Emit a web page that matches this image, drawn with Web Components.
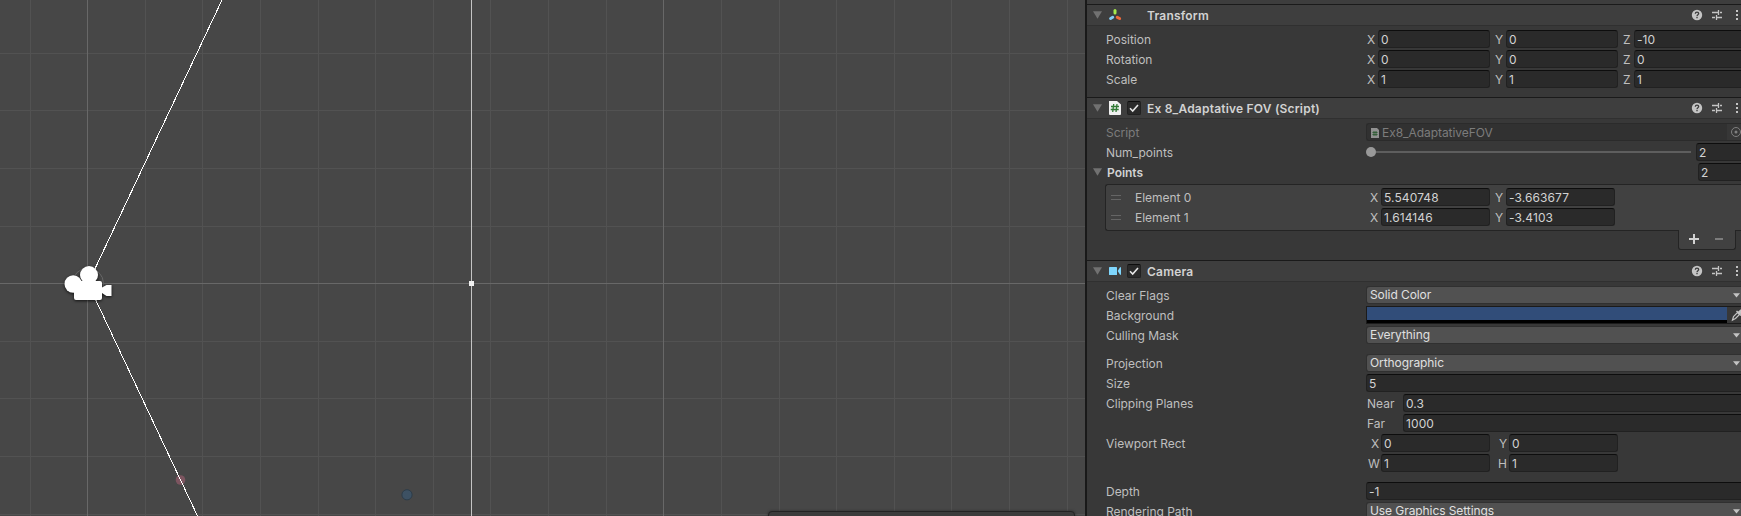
<!DOCTYPE html>
<html lang="en">
<head>
<meta charset="utf-8">
<title>Editor</title>
<style>
html,body{margin:0;height:100%;overflow:hidden;background:#383838}
body{font:12px/18px Inter,"Liberation Sans",sans-serif;color:#bfbfbf}
</style>
</head>
<body>
<editor-window></editor-window>
<script>
const make = (name, html, setup) => customElements.define(name, class extends HTMLElement {
  constructor() {
    super();
    this.attachShadow({ mode: 'open' });
  }
  connectedCallback() {
    this.shadowRoot.innerHTML = typeof html === 'function' ? html(this) : html;
    if (setup) setup(this);
  }
});

const columns = [30,87,145,202,260,318,375,433,490,548,606,663,721,779,836,894,951,1009,1067];
const rows = [53,110,168,226,283,341,398,456,514];
const major = n => n === 87 || n === 663 || n === 283;

make('scene-view', () => `
<style>
:host{display:block;position:relative;background:#474747;overflow:hidden}
svg{display:block}
.overlay{position:absolute;left:768px;top:511px;width:305px;height:20px;border:1px solid #232323;border-radius:4px;background:#3c3c3c;box-shadow:0 0 3px #0006}
</style>
<svg width="1085" height="516" viewBox="0 0 1085 516">
  <g shape-rendering="crispEdges">
  ${columns.filter(x => !major(x)).map(x => `<rect x="${x}" width="1" height="516" fill="#525252"/>`).join('')}
  ${rows.filter(y => !major(y)).map(y => `<rect y="${y}" width="1085" height="1" fill="#525252"/>`).join('')}
  <rect x="87" width="1" height="516" fill="#686868"/><rect x="663" width="1" height="516" fill="#686868"/>
  <rect y="283" width="1085" height="1" fill="#686868"/>
  <rect x="471" width="1" height="516" fill="#c4c4c4"/><rect x="469" y="281" width="5" height="5" fill="#f0f0f0"/>
  </g>
  <circle cx="180.5" cy="480" r="4.8" fill="#7d5560"/>
  <circle cx="407" cy="494.8" r="5.1" fill="#3d5163" stroke="#2c3c49"/>
  <path d="M222 0 88 283.5 197.500 516" fill="none" stroke="#fff" stroke-width="1" shape-rendering="crispEdges"/>
  <circle cx="88" cy="283.500" r="16" fill="#474747"/>
  <path d="M71 283.500H104M87.500 268V300" stroke="#686868"/>
  <circle cx="88" cy="283.500" r="15.500" fill="none" stroke="#686868"/>
  <g fill="#fff" style="filter:drop-shadow(0 1px 1.5px #000b)">
    <circle cx="73.200" cy="284" r="8.700"/><circle cx="89" cy="275" r="9"/>
    <path d="M76 281H100Q102 281 102 283V287.500L106.500 285H111.500V296H106.500L102 293V298Q102 300 100 300H76Q74 300 74 298V283Q74 281 76 281Z"/>
  </g>
</svg>
<div class="overlay"></div>`);

make('fold-arrow', `<style>:host{display:block;width:9px;height:8px}svg{display:block}</style>
<svg width="9" height="8"><path d="M0 .3H9L4.500 7.700Z" fill="#717171"/></svg>`);

const icons = {
  transform: `<svg width="14" height="14" viewBox="0 0 14 14" fill="none" stroke-width="3" stroke-linecap="round"><path d="M7 2.500V5" stroke="#a6ea4c"/><path d="M4.700 9.300 2.600 10.500" stroke="#86cdf5"/><path d="M9.300 9.300 11.600 10.500" stroke="#ef6a3c"/></svg>`,
  script: `<svg width="14" height="14" viewBox="0 0 14 14"><path d="M1 0H9L13 3.500V13Q13 14 12 14H2Q1 14 1 13Z" fill="#f1f1f1"/><path d="M5.700 3 4.700 11M9 3 8 11M3 5.500H11M2.700 8.500H10.700" stroke="#317a35" stroke-width="1.300"/></svg>`,
  camera: `<svg width="14" height="14" viewBox="0 0 14 14" fill="#7fd6fd"><rect x="1" y="3" width="8" height="8" rx=".6"/><path d="M9.700 7 12 3.300H13V10.700H12Z"/></svg>`
};

make('component-header', el => `
<style>
:host{display:flex;align-items:center;box-sizing:border-box;height:22px;border-top:1px solid #1a1a1a;border-bottom:1px solid #303030;background:#3e3e3e;font-weight:600;color:#d2d2d2}
fold-arrow{margin-left:6px}
.icon{width:14px;height:14px;margin-left:6px}
.icon svg,.box svg{display:block}
.box{box-sizing:border-box;width:14px;height:14px;margin:0 6px 0 5px;border-radius:2px}
.on{background:#2a2a2a;border:1px solid #212121;border-top-color:#0d0d0d}
.title{flex:1;padding-top:2px;letter-spacing:.2px}
.tools{width:51px;height:14px}
</style>
<fold-arrow></fold-arrow>
<div class="icon">${icons[el.getAttribute('icon')]}</div>
<div class="box ${el.hasAttribute('toggle') ? 'on' : ''}">${el.hasAttribute('toggle') ? '<svg width="12" height="12"><path d="M2 6.300 4.700 9 10 3" fill="none" stroke="#e6e6e6" stroke-width="1.600"/></svg>' : ''}</div>
<div class="title"><slot></slot></div>
<svg class="tools" viewBox="0 0 51 14">
  <circle cx="7" cy="7" r="5.200" fill="#c4c4c4"/>
  <path d="M5.300 5.800Q5.400 4.200 7 4.200T8.700 5.600C8.700 6.800 7 6.700 7 8.200M7 9.100V10.300" fill="none" stroke="#3a3a3a" stroke-width="1.300"/>
  <path d="M22 4.500H28M30 4.500H32M22 9.500H25M27 9.500H32M28.500 2V7M26.500 7V12" fill="none" stroke="#c4c4c4" stroke-width="1.300"/>
  <path d="M46 2H48V4H46ZM46 6H48V8H46ZM46 10H48V12H46Z" fill="#c4c4c4"/>
</svg>`);

make('prop-row', el => `
<style>
:host{display:flex;height:18px;margin-bottom:2px;padding-left:var(--indent,19px);white-space:nowrap}
.label{flex:none;width:var(--label,260px);box-sizing:border-box;line-height:20px;letter-spacing:-.02px}
:host([off]) .label{color:#7c7c7c}
:host([strong]) .label{font-weight:600;color:#d2d2d2}
</style><div class="label">${el.getAttribute('label') || ''}</div><slot></slot>`);

make('num-field', el => `
<style>
:host{display:flex;flex:none}
:host([grow]){flex:1}
.axis{box-sizing:border-box;line-height:20px;width:${el.getAttribute('lw') || 0}px;padding-left:${el.getAttribute('pad') || 0}px}
.value{box-sizing:border-box;height:18px;padding-left:2px;line-height:18px;border:1px solid #212121;border-top-color:#0d0d0d;border-radius:3px;background:#2a2a2a;color:#d2d2d2;letter-spacing:.1px;${el.hasAttribute('grow') ? 'flex:1;border-right:0;border-radius:3px 0 0 3px' : `width:${el.getAttribute('w')}px`}}
</style>
${el.hasAttribute('axis') ? `<div class="axis">${el.getAttribute('axis')}</div>` : ''}<div class="value"><slot></slot></div>`);

make('drop-field', `
<style>
:host{display:flex;flex:1;box-sizing:border-box;height:18px;margin-left:1px;padding:0 1px 0 3px;justify-content:space-between;align-items:center;border:0 solid #303030;border-width:1px 0 1px 0;border-radius:3px 0 0 3px;background:#515151;color:#e0e0e0;box-shadow:-1px 0 #303030}
span{line-height:16px;margin-top:-1px;letter-spacing:-.08px}
</style><span><slot></slot></span><svg width="7" height="5"><path d="M0 .3H7L3.500 4.500Z" fill="#c4c4c4"/></svg>`);

make('object-field', `
<style>
:host{display:flex;flex:1;box-sizing:border-box;height:18px;align-items:center;border:1px solid #2b2b2b;border-right:0;border-radius:3px 0 0 3px;background:#313131;color:#7c7c7c}
.doc{margin:2px 3px 0 4px}
.txt{flex:1;padding-top:2px;letter-spacing:-.05px}
.pick{width:14px;height:16px;background:#373737}
</style>
<svg class="doc" width="8" height="10"><path d="M0 0H6L8 2V10H0Z" fill="#919191"/><path d="M3 3V8M5 3V8M1.500 4.500H6.500M1.500 6.500H6.500" stroke="#355f3a"/></svg>
<span class="txt"><slot></slot></span>
<svg class="pick" viewBox="0 0 14 16"><circle cx="9" cy="8" r="4.500" fill="none" stroke="#7f7f7f"/><circle cx="9" cy="8" r="1.500" fill="#7f7f7f"/></svg>`);

make('slider-track', `
<style>
:host{display:flex;align-items:center;width:325px;margin-right:5px}
i{width:10px;height:10px;border-radius:50%;background:#999}
b{flex:1;height:2px;background:#5e5e5e}
</style><i></i><b></b>`);

make('color-field', `
<style>
:host{display:flex;flex:1;box-sizing:border-box;height:18px;border:1px solid #1b1b1b;border-right:0;background:#383838}
.swatch{width:360px;box-sizing:border-box;background:#314d79;border-bottom:3px solid #000}
svg{margin-left:4px}
</style><div class="swatch"></div>
<svg width="11" height="16" viewBox="0 0 11 16"><path d="M1.500 13 2.500 9.500 6.500 5.500 8.500 7.500 4.500 11.500Z" fill="none" stroke="#c4c4c4" stroke-width="1.200"/><path d="M5 4.500 6 3.500 7.200 4.600 9.500 2.500 11 2.500V6L9.600 7 10.500 8 9.500 9Z" fill="#c4c4c4"/></svg>`);

make('point-list', `
<style>
:host{display:block;margin:1px 0 0 18px}
.box{box-sizing:border-box;height:47px;padding-top:3px;border:1px solid #242424;border-right:0;border-radius:3px 0 0 3px;background:#414141}
.item{display:flex}
.grip{width:10px;height:3px;margin:7px 0 0 5px;border:solid #656565;border-width:1px 0}
prop-row{--indent:14px;--label:232px}
.foot{display:flex;box-sizing:border-box;gap:16px;align-items:center;width:58px;height:20px;margin:-1px 0 0 573px;padding:0 0 2px 10px;border:1px solid #242424;border-top:0;border-radius:0 0 3px 3px;background:#414141}
</style>
<div class="box">
<div class="item"><div class="grip"></div><prop-row label="Element 0"><num-field axis="X" pad="3" lw="14" w="109">5.540748</num-field><num-field axis="Y" pad="5" lw="16" w="109">-3.663677</num-field></prop-row></div>
<div class="item"><div class="grip"></div><prop-row label="Element 1"><num-field axis="X" pad="3" lw="14" w="109">1.614146</num-field><num-field axis="Y" pad="5" lw="16" w="109">-3.4103</num-field></prop-row></div>
</div>
<div class="foot"><svg width="10" height="10"><path d="M0 5H10M5 0V10" stroke="#d2d2d2" stroke-width="2"/></svg><svg width="8" height="10"><path d="M0 5H8" stroke="#7c7c7c" stroke-width="2"/></svg></div>`);

make('inspector-panel', `
<style>
:host{display:block;box-sizing:border-box;border-left:2px solid #191919;background:#383838;overflow:hidden}
.strip{height:4px;background:#3d3d3d}
section{padding-top:4px;box-sizing:border-box}
.fold{display:flex}
.fold fold-arrow{margin:5px 0 0 6px}
.fold prop-row{flex:1;--indent:5px;--label:591px}
.gap{height:8px}
</style>
<div class="strip"></div>
<component-header icon="transform">Transform</component-header>
<section style="height:71px">
${[['Position','0','0','-10'],['Rotation','0','0','0'],['Scale','1','1','1']].map(r => `<prop-row label="${r[0]}"><num-field axis="X" pad="1" lw="12" w="112">${r[1]}</num-field><num-field axis="Y" pad="5" lw="16" w="112">${r[2]}</num-field><num-field axis="Z" pad="5" lw="16" grow>${r[3]}</num-field></prop-row>`).join('')}
</section>
<component-header icon="script" toggle>Ex 8_Adaptative FOV (Script)</component-header>
<section style="height:141px">
<prop-row label="Script" off><object-field>Ex8_AdaptativeFOV</object-field></prop-row>
<prop-row label="Num_points"><slider-track></slider-track><num-field grow>2</num-field></prop-row>
<div class="fold"><fold-arrow></fold-arrow><prop-row label="Points" strong><num-field grow>2</num-field></prop-row></div>
<point-list></point-list>
</section>
<component-header icon="camera" toggle>Camera</component-header>
<section>
<prop-row label="Clear Flags"><drop-field>Solid Color</drop-field></prop-row>
<prop-row label="Background"><color-field></color-field></prop-row>
<prop-row label="Culling Mask"><drop-field>Everything</drop-field></prop-row>
<div class="gap"></div>
<prop-row label="Projection"><drop-field>Orthographic</drop-field></prop-row>
<prop-row label="Size"><num-field grow>5</num-field></prop-row>
<prop-row label="Clipping Planes"><num-field axis="Near" pad="1" lw="37" grow>0.3</num-field></prop-row>
<prop-row><num-field axis="Far" pad="1" lw="37" grow>1000</num-field></prop-row>
<prop-row label="Viewport Rect"><num-field axis="X" pad="5" lw="15" w="109">0</num-field><num-field axis="Y" pad="9" lw="19" w="109">0</num-field></prop-row>
<prop-row><num-field axis="W" pad="2" lw="15" w="109">1</num-field><num-field axis="H" pad="8" lw="19" w="109">1</num-field></prop-row>
<div class="gap"></div>
<prop-row label="Depth"><num-field grow>-1</num-field></prop-row>
<prop-row label="Rendering Path"><drop-field>Use Graphics Settings</drop-field></prop-row>
</section>`);

make('editor-window', `
<style>
:host{display:flex;height:516px;overflow:hidden}
scene-view{flex:none;width:1085px}
inspector-panel{flex:1;min-width:0}
</style><scene-view></scene-view><inspector-panel></inspector-panel>`);
</script>
</body>
</html>
